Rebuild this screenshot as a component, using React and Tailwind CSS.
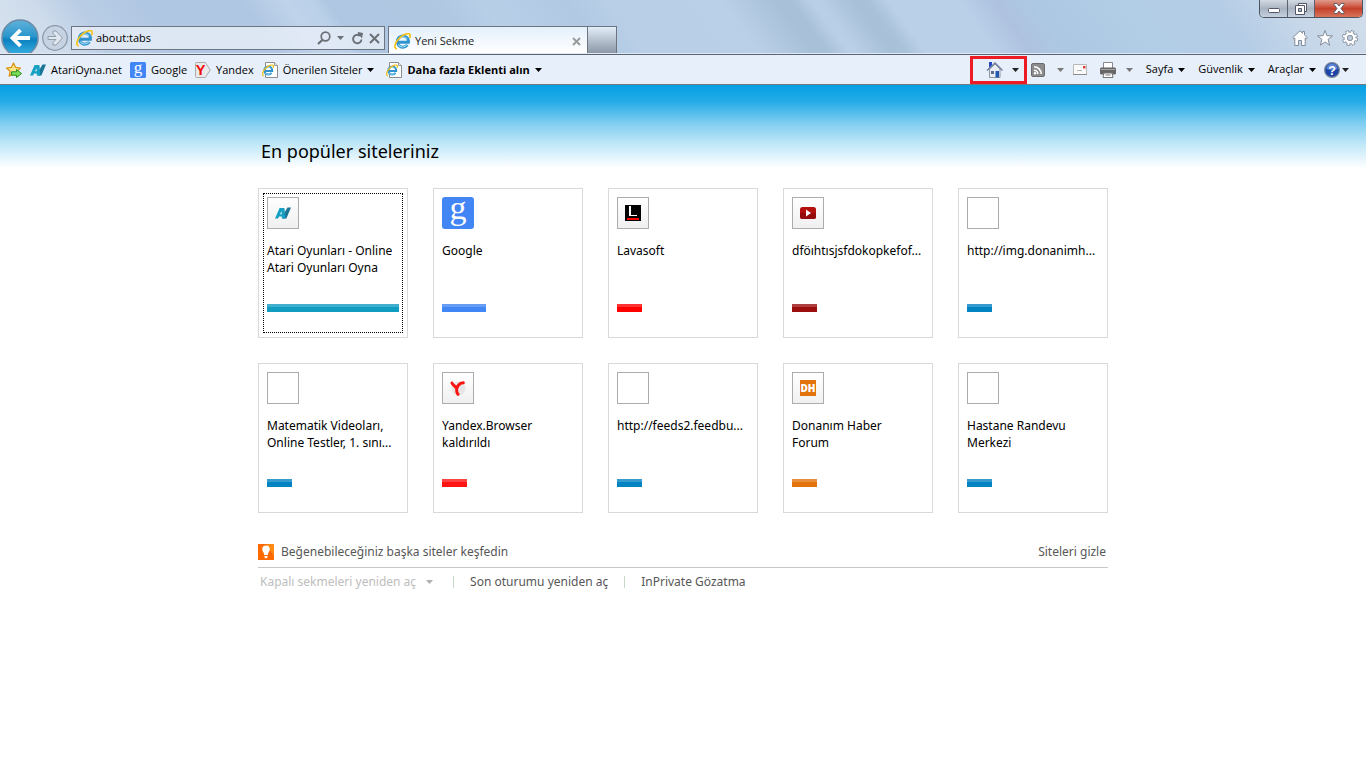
import React from "react";

const sites = [
  { title: "Atari Oyunları - Online Atari Oyunları Oyna", icon: "atari", bar: "w-[132px] bg-[#119cc2] border-[#41b0ce]", focused: true },
  { title: "Google", icon: "google", bar: "w-11 bg-[#4285f4] border-[#689df6]" },
  { title: "Lavasoft", icon: "lavasoft", bar: "w-[25px] bg-[#ff0000] border-[#ff3333]" },
  { title: "dföıhtısjsfdokopkefof...", icon: "video", bar: "w-[25px] bg-[#9b0e0e] border-[#af3e3e]" },
  { title: "http://img.donanimh...", bar: "w-[25px] bg-[#0483c3] border-[#369cd0]" },
  { title: "Matematik Videoları, Online Testler, 1. sını...", bar: "w-[25px] bg-[#0483c3] border-[#369cd0]" },
  { title: "Yandex.Browser kaldırıldı", icon: "browser", bar: "w-[25px] bg-[#ff1414] border-[#ff4343]" },
  { title: "http://feeds2.feedbu...", bar: "w-[25px] bg-[#0483c3] border-[#369cd0]" },
  { title: "Donanım Haber\nForum", icon: "dh", bar: "w-[25px] bg-[#e2730d] border-[#e88f3e]" },
  { title: "Hastane Randevu Merkezi", bar: "w-[25px] bg-[#0483c3] border-[#369cd0]" },
];

function Caret({ className = "text-black" }) {
  return (
    <svg width="7" height="4" viewBox="0 0 7 4" className={"shrink-0 " + className} aria-hidden="true">
      <path d="M0 0h7L3.5 4z" fill="currentColor" />
    </svg>
  );
}

function IeShape() {
  return (
    <g fill="none">
      <path d="M12.6 11.2A5.3 5.3 0 1 1 13.6 8.6H4.5" stroke="#2f93cf" strokeWidth="2.8" />
      <path d="M12.3 10.8A4.9 4.9 0 0 1 4 11M4.3 5.6A4.9 4.9 0 0 1 12.4 6" stroke="#8fd4f3" strokeWidth="1.1" />
      <path d="M2.6 15C-1 14.5 1.2 8.5 5.5 4.4C9.5 .8 14.6-.6 15.2 1.9C15.4 3 15 4 14.6 4.7" stroke="#f5c21b" strokeWidth="1.6" />
    </g>
  );
}

function IeIcon() {
  return (
    <svg width="17" height="17" viewBox="0 0 16 16" className="shrink-0" aria-hidden="true">
      <IeShape />
    </svg>
  );
}

function IePageIcon() {
  return (
    <svg width="16" height="16" viewBox="0 0 16 16" className="shrink-0" aria-hidden="true">
      <path d="M3.5.5h9l3 3v12h-12z" fill="#fff" stroke="#8d8d8d" />
      <path d="M12.5.5v3h3" fill="#eee" stroke="#999" />
      <g transform="translate(0 2.5) scale(.75)">
        <IeShape />
      </g>
    </svg>
  );
}

function AtariIcon({ size = 16 }) {
  return (
    <svg width={size} height={size} viewBox="0 0 16 16" className="shrink-0" aria-hidden="true">
      <path fillRule="evenodd" d="M0 13.5L4.6 3H9.2L10 13.5H6.8V11.6H4L3.1 13.5ZM5 9.2H6.8L6.6 6Z" fill="#15a0c4" />
      <path d="M8.2 13.5L8.6 9 12.5 2.5H16L11.4 13.5Z" fill="#1b7796" />
      <path d="M6.2 3H9.2L10.3 13.5H7.8Z" fill="#15a0c4" />
    </svg>
  );
}

function GoogleIcon({ size = 16 }) {
  return (
    <svg width={size} height={size} viewBox="0 0 32 32" className="shrink-0 overflow-visible" aria-hidden="true">
      <rect width="32" height="32" rx="3" fill="#4285f4" />
      <text x="16" y="21.5" textAnchor="middle" fontFamily="Liberation Serif, serif" fontSize="34" fill="#fff">g</text>
    </svg>
  );
}

function YandexIcon() {
  return (
    <svg width="16" height="16" viewBox="0 0 16 16" className="shrink-0 overflow-visible" aria-hidden="true">
      <path d="M1.5.5h8.8l5 7.5-5 7.5H1.5a1 1 0 0 1-1-1v-13a1 1 0 0 1 1-1z" fill="#e9e9e9" stroke="#a9a9a9" />
      <text x="5.6" y="13" textAnchor="middle" fontFamily="Liberation Sans, sans-serif" fontWeight="700" fontSize="14.5" fill="#f00b0b">Y</text>
    </svg>
  );
}

function StarAddIcon() {
  return (
    <svg width="16" height="16" viewBox="0 0 16 16" className="shrink-0" aria-hidden="true">
      <path d="M7.5 1l2.1 4.4 4.9.6-3.6 3.3.9 4.8-4.3-2.3-4.3 2.3.9-4.8L.6 6l4.8-.6z" fill="#fde48a" stroke="#d9920c" strokeWidth="1.2" strokeLinejoin="round" />
      <path d="M5.5 9.8h5V7.6l5 3.9-5 4v-2.3h-5z" fill="#7be05c" stroke="#268c1a" />
    </svg>
  );
}

function SiteGlyph({ icon }) {
  if (icon === "atari") return <AtariIcon />;
  if (icon === "lavasoft")
    return (
      <svg width="16" height="16" viewBox="0 0 16 16" aria-hidden="true">
        <path d="M0 0h16v16H0z" fill="#000" />
        <path d="M4 1h2v9h6v1H4z" fill="#fff" />
        <path d="M2 13h12v2H2z" fill="#f00" />
      </svg>
    );
  if (icon === "video")
    return (
      <svg width="16" height="16" viewBox="0 0 16 16" aria-hidden="true">
        <rect y="2" width="16" height="12" rx="2.5" fill="#b30f0c" />
        <path d="M0 8h16v3.5a2.5 2.5 0 0 1-2.5 2.5h-11A2.5 2.5 0 0 1 0 11.5z" fill="#960c0c" />
        <path d="M6 4.5v7l5-3.5z" fill="#fff" />
      </svg>
    );
  if (icon === "browser")
    return (
      <svg width="16" height="16" viewBox="0 0 16 16" aria-hidden="true">
        <circle cx="8.5" cy="8.5" r="7" fill="#e6e6e6" />
        <path d="M2 3C2.500 5 4.500 5.500 6.500 8M13.300 2.800C10.500 3 8 5 6.900 8C6.300 10.500 6.800 12.800 8 14.300" fill="none" stroke="#fb1411" strokeWidth="3" strokeLinecap="round" strokeLinejoin="round" />
      </svg>
    );
  if (icon === "dh")
    return (
      <svg width="16" height="16" viewBox="0 0 16 16" aria-hidden="true">
        <path d="M0 0h16v16H0z" fill="#e2730d" />
        <text x="8" y="12" textAnchor="middle" fontFamily="Open Sans, sans-serif" fontWeight="800" fontSize="10" fill="#fff">DH</text>
      </svg>
    );
  return null;
}

function SiteTile({ site }) {
  const plain = site.icon ? "bg-linear-to-b from-white to-[#f0f0f0]" : "bg-white";
  return (
    <a href="#site" className="block h-[150px] border border-[#d9d9d9] bg-white p-1 text-black">
      <div className={"flex h-full flex-col border border-dotted p-[3px] " + (site.focused ? "border-black" : "border-transparent")}>
        {site.icon === "google" ? (
          <GoogleIcon size={32} />
        ) : (
          <span className={"flex size-8 shrink-0 items-center justify-center border border-[#acacac] " + plain}>
            <SiteGlyph icon={site.icon} />
          </span>
        )}
        <span className="mt-[13px] h-[34px] text-[12px] leading-[17px] whitespace-pre-line">{site.title}</span>
        <span className={"mt-7 block h-2 border-t-[3px] " + site.bar} />
      </div>
    </a>
  );
}

function Header() {
  return (
    <header className="flex h-[55px] justify-between border-b border-[#5b6472] bg-[linear-gradient(54deg,#d8e3ef_0%,#cddbeb_5%,#b9cde5_8%,#b0c7e3_13%,#b0c7e3_20%,#bfd3ea_23%,#bad0e9_25%,#aec6e1_26%,#b0c8e2_34%,#b8cfe8_37%,#b1c9e3_43%,#b9cfe8_46%,#bad0e9_54%,#a9c0d9_58%,#a9c0d9_59%,#b9cfe8_60.5%,#b9cfe8_61%,#a9c0d9_63.5%,#aac1da_64.5%,#bad0e9_66%,#bad0e9_71%,#aec2df_73.5%,#adc8e2_76%,#b2cde6_83%,#b4cce6_89%,#c6d7e9_94%,#d3deea_100%)] pb-px text-[11px] shadow-[inset_0_-1px_0_#dfe8f3]">
      <div className="flex items-end">
        <button aria-label="Geri" className="flex h-[34px] w-[39px] items-start overflow-hidden pl-px">
          <svg width="38" height="38" viewBox="0 0 38 38" className="shrink-0" aria-hidden="true">
            <defs>
              <linearGradient id="backFill" x1="0" y1="0" x2="0" y2="1">
                <stop offset="0" stopColor="#5fb2da" />
                <stop offset=".45" stopColor="#2c97cd" />
                <stop offset=".55" stopColor="#0b82c0" />
                <stop offset="1" stopColor="#3db4e4" />
              </linearGradient>
            </defs>
            <circle cx="19" cy="19" r="18" fill="url(#backFill)" stroke="#6d8ba6" strokeWidth="1.5" />
            <path d="M19.500 11L11.500 19l8 8M12 19h17" fill="none" stroke="#fff" strokeWidth="3.8" />
          </svg>
        </button>
        <button aria-label="İleri" className="mb-0.5 ml-[3px] size-[26px]">
          <svg width="26" height="26" viewBox="0 0 26 26" aria-hidden="true">
            <circle cx="13" cy="13" r="12.3" fill="#c6d3e3" stroke="#8b97a8" strokeWidth="1.2" />
            <path d="M6 11.5h8L11 8.500V6h3l6.500 7-6.500 7h-3v-2.500l3-3H6z" fill="#dfe7f0" stroke="#929dac" strokeLinejoin="round" />
          </svg>
        </button>
        <form className="mb-[3px] ml-[3px] flex h-6 w-[314px] items-center border border-[#6e7580] bg-[#e9eff8]/80 px-1">
          <IeIcon />
          <input aria-label="Adres" defaultValue="about:tabs" className="ml-[3px] min-w-0 flex-1 bg-transparent text-black outline-none" />
          <button type="button" aria-label="Ara" className="mr-1.5">
            <svg width="14" height="14" viewBox="0 0 14 14" aria-hidden="true">
              <circle cx="8.5" cy="5.5" r="4.3" fill="none" stroke="#6b6f76" strokeWidth="1.7" />
              <path d="M5.5 8.700L1 13" stroke="#6b6f76" strokeWidth="2.2" />
            </svg>
          </button>
          <button type="button" aria-label="Arama seçenekleri" className="mr-2">
            <Caret className="text-[#6b6f76]" />
          </button>
          <button type="button" aria-label="Yenile" className="mr-1.5">
            <svg width="11" height="13" viewBox="0 0 11 13" aria-hidden="true">
              <path d="M9.500 7.500A4.200 4.200 0 1 1 7 3.200" fill="none" stroke="#6b6f76" strokeWidth="1.9" />
              <path d="M6 0l5 1-1 5.500-1.500-2L5.500 4z" fill="#6b6f76" />
            </svg>
          </button>
          <button type="button" aria-label="Durdur">
            <svg width="11" height="11" viewBox="0 0 11 11" aria-hidden="true">
              <path d="M1 1l9 9M10 1l-9 9" stroke="#6b6f76" strokeWidth="2" />
            </svg>
          </button>
        </form>
        <div className="ml-[3px] flex h-[27px] w-[200px] items-center border border-b-0 border-[#6e7580] bg-linear-to-b from-[#e4f0fb] to-white pt-0.5 pr-1.5 pl-[5px]">
          <IeIcon />
          <span className="ml-1 flex-1 text-[#222]">Yeni Sekme</span>
          <button aria-label="Sekmeyi kapat">
            <svg width="9" height="9" viewBox="0 0 9 9" aria-hidden="true">
              <path d="M1 1l7 7M8 1l-7 7" stroke="#9b9b9b" strokeWidth="2" />
            </svg>
          </button>
        </div>
        <button aria-label="Yeni sekme" className="h-[27px] w-[29px] border border-b-0 border-l-0 border-[#6e7580] bg-linear-to-b from-[#e3eef9] to-[#8c98a6]" />
      </div>
      <div className="flex flex-col items-end justify-between">
        <div className="mr-[3px] flex h-[18px] overflow-hidden rounded-b-[5px] border border-t-0 border-[#4d5562]">
          <button aria-label="Küçült" className="flex w-7 items-center justify-center border-r border-[#5a6270] bg-linear-to-b from-[#d3dae3] via-[#a9b3c0] to-[#c4d1e0] pt-1">
            <svg width="12" height="5" viewBox="0 0 12 5" aria-hidden="true">
              <rect x=".5" y=".5" width="11" height="4" rx="1" fill="#fff" stroke="#535666" />
            </svg>
          </button>
          <button aria-label="Önceki boyut" className="flex w-[27px] items-center justify-center border-r border-[#5a6270] bg-linear-to-b from-[#d3dae3] via-[#a9b3c0] to-[#c4d1e0]">
            <svg width="12" height="12" viewBox="0 0 12 12" aria-hidden="true">
              <path d="M3.5.5h8v8h-8z" fill="#fff" stroke="#535666" />
              <path d="M.5 2.5h9v9h-9z" fill="#fff" stroke="#535666" />
              <path d="M3.5 5.5h3v3h-3z" fill="#b0bac8" stroke="#535666" />
            </svg>
          </button>
          <button aria-label="Kapat" className="flex w-[47px] items-center justify-center bg-linear-to-b from-[#df9a8c] via-[#c4402a] to-[#d8735a]">
            <svg width="12" height="11" viewBox="0 0 12 11" aria-hidden="true">
              <path d="M1 .5h3L6 3 8 .5h3v1L8 5.500l3 4v1H8L6 8l-2 2.500H1v-1l3-4-3-4z" fill="#fff" stroke="#535666" strokeWidth=".9" />
            </svg>
          </button>
        </div>
        <div className="mr-2 mb-[7px] flex items-center gap-[9px]">
          <button aria-label="Giriş">
            <svg width="16" height="16" viewBox="0 0 16 16" className="block" aria-hidden="true">
              <path d="M8 .8L.8 7.600l1 1.200 1-.8v7.500h3.700v-5h3v5h3.700V8l1 .8 1-1.200-2.700-2.600V1.500h-2v1.700z" fill="#fff" stroke="#828b99" />
            </svg>
          </button>
          <button aria-label="Sık kullanılanlar">
            <svg width="16" height="16" viewBox="0 0 16 16" className="block" aria-hidden="true">
              <path d="M8 .5l1.900 5.200 5.600.2-4.400 3.400 1.500 5.900L8 11.900l-4.600 3.300 1.500-5.900L.5 5.900l5.600-.2z" fill="#fff" stroke="#828b99" />
            </svg>
          </button>
          <button aria-label="Araçlar menüsü">
            <svg width="16" height="16" viewBox="0 0 16 16" className="block" aria-hidden="true">
              <circle cx="8" cy="8" r="6.5" fill="none" stroke="#828b99" strokeWidth="3" strokeDasharray="3.1 2.005" />
              <circle cx="8" cy="8" r="4.3" fill="none" stroke="#828b99" strokeWidth="4.2" />
              <circle cx="8" cy="8" r="6" fill="none" stroke="#fff" strokeWidth="2.4" strokeDasharray="1.8 2.912" strokeDashoffset="-.5" />
              <circle cx="8" cy="8" r="4.2" fill="none" stroke="#fff" strokeWidth="2.6" />
              <circle cx="8" cy="8" r="2.5" fill="#c0cfe1" stroke="#828b99" strokeWidth=".8" />
            </svg>
          </button>
        </div>
      </div>
    </header>
  );
}

function Toolbar() {
  return (
    <nav className="flex h-[30px] items-center justify-between border-b border-[#77797d] bg-[#e7effa] text-[11px] whitespace-nowrap text-black">
      <div className="flex items-center gap-2 pt-px pl-1.5">
        <button aria-label="Sık kullanılanlara ekle"><StarAddIcon /></button>
        <a href="#atari" className="flex items-center gap-[5px]"><AtariIcon />AtariOyna.net</a>
        <a href="#google" className="flex items-center gap-[5px]"><GoogleIcon />Google</a>
        <a href="#yandex" className="flex items-center gap-[5px]"><YandexIcon />Yandex</a>
        <button className="flex items-center gap-[5px]"><IePageIcon />Önerilen Siteler<Caret /></button>
        <button className="ml-1 flex items-center gap-[5px] font-bold"><IePageIcon />Daha fazla Eklenti alın<Caret /></button>
      </div>
      <div className="flex items-center pr-[17px]">
        <div className="flex h-7 w-[57px] items-center justify-end gap-[9px] border-3 border-[#ed1c24] pr-[5px]">
          <button aria-label="Giriş sayfası">
            <svg width="17" height="17" viewBox="0 0 17 17" className="block" aria-hidden="true">
              <path d="M3 1h3v6H3z" fill="#2446c4" />
              <path d="M3.5 8L9 3l5 5v8.500H3.500z" fill="#e9edf3" stroke="#8d93a0" />
              <path d="M1 9.500L9 2l7.500 7.500" fill="none" stroke="#7482a0" strokeWidth="1.5" />
              <path d="M9.500 10H13v6.500H9.500z" fill="#1e58b0" />
              <path d="M5 10h3v3H5z" fill="#5a6d90" />
            </svg>
          </button>
          <button aria-label="Giriş sayfası seçenekleri"><Caret className="text-[#222]" /></button>
        </div>
        <button aria-label="Akışlar" className="ml-1">
          <svg width="14" height="14" viewBox="0 0 14 14" className="block" aria-hidden="true">
            <rect x=".5" y=".5" width="13" height="13" rx="1.5" fill="#8c8c8c" stroke="#6c6c6c" />
            <path d="M3 7.200A3.800 3.800 0 0 1 6.800 11M3 3.800A7.200 7.200 0 0 1 10.200 11" fill="none" stroke="#fff" strokeWidth="1.6" />
            <circle cx="4" cy="10.2" r="1.2" fill="#fff" />
          </svg>
        </button>
        <button aria-label="Akış seçenekleri" className="ml-3"><Caret className="text-[#777]" /></button>
        <button aria-label="Posta" className="ml-[9px]">
          <svg width="14" height="11" viewBox="0 0 14 11" className="block" aria-hidden="true">
            <path d="M.5.5h13v10H.5z" fill="#fafafa" stroke="#b9b9b9" />
            <path d="M0 10.500h14" stroke="#8b8b8b" />
            <path d="M10 2h2.500v2.500H10z" fill="#e23b3b" />
            <path d="M4 6.500h5" stroke="#b5b5b5" />
          </svg>
        </button>
        <button aria-label="Yazdır" className="ml-[13px]">
          <svg width="16" height="16" viewBox="0 0 16 16" className="block" aria-hidden="true">
            <path d="M3.5.5h9v6h-9z" fill="#fff" stroke="#888" />
            <rect y="5.500" width="16" height="7" rx="1.500" fill="#666" />
            <path d="M1 7.500h14" stroke="#a5a5a5" />
            <path d="M4 11h8l1 4.500H3z" fill="#fff" stroke="#777" />
            <path d="M5.500 13h5" stroke="#777" />
          </svg>
        </button>
        <button aria-label="Yazdırma seçenekleri" className="ml-2.5"><Caret className="text-[#777]" /></button>
        <button className="ml-[13px] flex items-center gap-[5px]">Sayfa<Caret /></button>
        <button className="ml-[13px] flex items-center gap-[5px]">Güvenlik<Caret /></button>
        <button className="ml-[13px] flex items-center gap-[5px]">Araçlar<Caret /></button>
        <button aria-label="Yardım" className="ml-2 flex items-center gap-0.5">
          <svg width="16" height="16" viewBox="0 0 16 16" aria-hidden="true">
            <circle cx="8" cy="8" r="7.4" fill="#1c45a8" stroke="#7d8798" strokeWidth="1.2" />
            <path d="M2.500 7A5.500 5.500 0 0 1 13.500 7C10 8.500 6 8.500 2.500 7z" fill="#5c83d3" />
            <text x="8" y="12.5" textAnchor="middle" fontFamily="Liberation Sans, sans-serif" fontWeight="700" fontSize="12.5" fill="#fff">?</text>
          </svg>
          <Caret className="text-[#222]" />
        </button>
      </div>
    </nav>
  );
}

export default function App() {
  return (
    <div className="min-h-screen bg-white font-['Open_Sans','Noto_Sans',sans-serif]">
      <Header />
      <Toolbar />
      <main className="bg-[linear-gradient(to_bottom,#049fe3_0,#22abe6_16px,#7fcdf1_38px,#c2e8f8_60px,#ffffff_83px)] px-4 pt-[52px] font-['Noto_Sans','Open_Sans',sans-serif]">
        <div className="mx-auto max-w-[850px]">
          <h1 className="pl-[3px] text-[18px] leading-7 text-black">En popüler siteleriniz</h1>
          <div className="mt-[23px] grid grid-cols-5 gap-[25px]">
            {sites.map((site) => (
              <SiteTile key={site.title} site={site} />
            ))}
          </div>
          <div className="mt-[27px] flex h-7 items-center justify-between border-b border-[#c8c8c8] pr-0.5 pb-1 text-[12px] text-[#575757]">
            <a href="#kesfet" className="flex items-center gap-[7px]">
              <svg width="16" height="16" viewBox="0 0 16 16" aria-hidden="true">
                <path d="M0 0h16v16H0z" fill="#ff6a00" />
                <path d="M8 0h8v12z" fill="#ff8a12" />
                <path d="M8 1.500a3.800 3.800 0 0 0-3.800 3.800C4.200 7.500 6 8.500 6.200 11h3.600C10 8.500 11.800 7.500 11.800 5.300A3.800 3.800 0 0 0 8 1.500zM6.500 12h3v1.500l-1.500 1-1.500-1z" fill="#fff" />
              </svg>
              Beğenebileceğiniz başka siteler keşfedin
            </a>
            <button>Siteleri gizle</button>
          </div>
          <div className="flex h-7 items-center pl-0.5 text-[12px] text-[#575757]">
            <button disabled className="flex items-center gap-2.5 text-[#bdbdbd]">
              Kapalı sekmeleri yeniden aç
              <Caret className="text-[#b0b0b0]" />
            </button>
            <span className="mr-4 ml-5 h-3 w-px bg-[#c5d9c5]" />
            <button>Son oturumu yeniden aç</button>
            <span className="mx-4 h-3 w-px bg-[#c5d9c5]" />
            <button>InPrivate Gözatma</button>
          </div>
        </div>
      </main>
    </div>
  );
}
